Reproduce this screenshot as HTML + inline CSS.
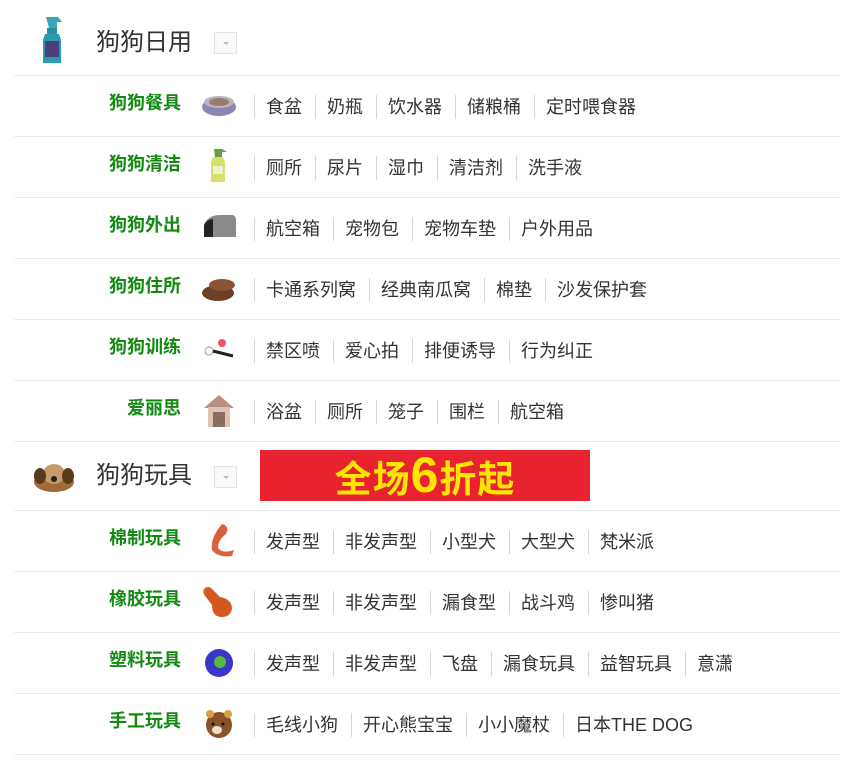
<!DOCTYPE html>
<html><head><meta charset="utf-8"><style>
*{margin:0;padding:0;box-sizing:border-box}
body{width:854px;height:763px;background:#fff;position:relative;font-family:"Liberation Sans","Noto Sans CJK SC",sans-serif;overflow:hidden}
.line{position:absolute;left:14px;width:825px;border-top:1px dotted #d8d8d8}
.hd{position:absolute;left:96px;font-size:24px;color:#333;line-height:30px}
.dd{position:absolute;left:214px;width:23px;height:22px;border:1px solid #e3e3e3;background:#fafafa}
.dd:after{content:"";position:absolute;left:8px;top:9px;border:3px solid transparent;border-top:3px solid #bbb}
.row{position:absolute;left:0;width:854px;height:61px}
.lab{position:absolute;right:673px;top:16px;font-size:18px;font-weight:bold;color:#128a12;line-height:24px;white-space:nowrap}
.ic{position:absolute;left:200px;top:12px;width:38px;height:36px}
.links{position:absolute;left:254px;top:20px;display:flex;font-size:18px;color:#333;line-height:24px;white-space:nowrap}
.links span{border-left:1px solid #d6d6d6;padding:0 13px 0 11px}
.banner{position:absolute;left:260px;top:450px;width:330px;height:51px;background:#e8232f;color:#ffe600;font-size:37px;font-weight:bold;text-align:center;line-height:51px;letter-spacing:1px}
.banner b{font-size:50px}
</style></head><body>
<svg style="position:absolute;left:40px;top:15px" width="30" height="52" viewBox="0 0 30 52"><path d="M6 2h12l4 5h-5v6h-8z" fill="#3aa5b8"/><rect x="7" y="13" width="10" height="6" fill="#2a8da0"/><path d="M5 19h14l2 6v23H3V25z" fill="#2b9bb0"/><rect x="5" y="26" width="14" height="16" fill="#4a3f7a"/></svg>
<div class="hd" style="top:28px">狗狗日用</div><div class="dd" style="top:32px"></div>
<div class="line" style="top:75px"></div>

<div class="row" style="top:75px"><div class="lab">狗狗餐具</div>
<svg class="ic" viewBox="0 0 38 36"><ellipse cx="19" cy="20" rx="17" ry="9" fill="#8d86b0"/><ellipse cx="19" cy="15" rx="15" ry="6" fill="#b9b6c2"/><ellipse cx="19" cy="15" rx="10" ry="4" fill="#9a7e6a"/></svg>
<div class="links"><span>食盆</span><span>奶瓶</span><span>饮水器</span><span>储粮桶</span><span>定时喂食器</span></div></div>
<div class="line" style="top:136px"></div>

<div class="row" style="top:136px"><div class="lab">狗狗清洁</div>
<svg class="ic" viewBox="0 0 38 36"><path d="M14 1h8l5 3h-5v5h-7z" fill="#6a9a4a"/><path d="M13 9h10l2 5v20H11V14z" fill="#d8e06a"/><rect x="13" y="18" width="10" height="8" fill="#eef2c8"/></svg>
<div class="links"><span>厕所</span><span>尿片</span><span>湿巾</span><span>清洁剂</span><span>洗手液</span></div></div>
<div class="line" style="top:197px"></div>

<div class="row" style="top:197px"><div class="lab">狗狗外出</div>
<svg class="ic" viewBox="0 0 38 36"><path d="M4 28V16Q8 6 20 6h12q4 0 4 6v16z" fill="#8a8a8a"/><path d="M4 28V16q3-6 9-6v18z" fill="#222"/></svg>
<div class="links"><span>航空箱</span><span>宠物包</span><span>宠物车垫</span><span>户外用品</span></div></div>
<div class="line" style="top:258px"></div>

<div class="row" style="top:258px"><div class="lab">狗狗住所</div>
<svg class="ic" viewBox="0 0 38 36"><ellipse cx="18" cy="23" rx="16" ry="8" fill="#6b4026"/><ellipse cx="22" cy="15" rx="13" ry="6" fill="#8a5534"/></svg>
<div class="links"><span>卡通系列窝</span><span>经典南瓜窝</span><span>棉垫</span><span>沙发保护套</span></div></div>
<div class="line" style="top:319px"></div>

<div class="row" style="top:319px"><div class="lab">狗狗训练</div>
<svg class="ic" viewBox="0 0 38 36"><circle cx="9" cy="20" r="4" fill="none" stroke="#bbb" stroke-width="1.5"/><path d="M13 20l20 5" stroke="#222" stroke-width="3"/><circle cx="22" cy="12" r="4" fill="#f0506e"/></svg>
<div class="links"><span>禁区喷</span><span>爱心拍</span><span>排便诱导</span><span>行为纠正</span></div></div>
<div class="line" style="top:380px"></div>

<div class="row" style="top:380px"><div class="lab">爱丽思</div>
<svg class="ic" viewBox="0 0 38 36"><path d="M4 16L19 3l15 13z" fill="#b89080"/><rect x="8" y="15" width="22" height="20" fill="#dcc3b4"/><rect x="13" y="20" width="12" height="15" fill="#8a6e62"/></svg>
<div class="links"><span>浴盆</span><span>厕所</span><span>笼子</span><span>围栏</span><span>航空箱</span></div></div>
<div class="line" style="top:441px"></div>

<svg style="position:absolute;left:30px;top:460px" width="48" height="34" viewBox="0 0 48 34"><ellipse cx="24" cy="22" rx="20" ry="10" fill="#a06a3a"/><ellipse cx="24" cy="14" rx="11" ry="10" fill="#c89a6a"/><ellipse cx="10" cy="16" rx="6" ry="8" fill="#5a3a1a"/><ellipse cx="38" cy="16" rx="6" ry="8" fill="#5a3a1a"/><circle cx="24" cy="19" r="3" fill="#222"/></svg>
<div class="hd" style="top:461px">狗狗玩具</div><div class="dd" style="top:466px"></div>
<div class="banner">全场<b>6</b>折起</div>
<div class="line" style="top:510px"></div>

<div class="row" style="top:510px"><div class="lab">棉制玩具</div>
<svg class="ic" viewBox="0 0 38 36"><path d="M22 2q8 2 4 10q-8 6-8 14q4 6 16 2l-2 6q-14 2-20-6q-2-12 10-26z" fill="#d8633a"/></svg>
<div class="links"><span>发声型</span><span>非发声型</span><span>小型犬</span><span>大型犬</span><span>梵米派</span></div></div>
<div class="line" style="top:571px"></div>

<div class="row" style="top:571px"><div class="lab">橡胶玩具</div>
<svg class="ic" viewBox="0 0 38 36"><path d="M4 6q4-4 8 0l8 8q12 2 12 12q-2 8-10 8q-10 0-10-12L6 14q-4-4-2-8z" fill="#d5581e"/></svg>
<div class="links"><span>发声型</span><span>非发声型</span><span>漏食型</span><span>战斗鸡</span><span>惨叫猪</span></div></div>
<div class="line" style="top:632px"></div>

<div class="row" style="top:632px"><div class="lab">塑料玩具</div>
<svg class="ic" viewBox="0 0 38 36"><circle cx="19" cy="19" r="14" fill="#3a36c8"/><circle cx="20" cy="18" r="6" fill="#58b83a"/></svg>
<div class="links"><span>发声型</span><span>非发声型</span><span>飞盘</span><span>漏食玩具</span><span>益智玩具</span><span>意潇</span></div></div>
<div class="line" style="top:693px"></div>

<div class="row" style="top:693px"><div class="lab">手工玩具</div>
<svg class="ic" viewBox="0 0 38 36"><circle cx="19" cy="20" r="13" fill="#8a5228"/><circle cx="10" cy="9" r="4" fill="#d8a040"/><circle cx="28" cy="9" r="4" fill="#d8a040"/><ellipse cx="17" cy="25" rx="5" ry="4" fill="#f0e0c8"/><circle cx="13" cy="19" r="1.5" fill="#111"/><circle cx="23" cy="19" r="1.5" fill="#111"/></svg>
<div class="links"><span>毛线小狗</span><span>开心熊宝宝</span><span>小小魔杖</span><span>日本THE DOG</span></div></div>
<div class="line" style="top:754px"></div>
</body></html>
